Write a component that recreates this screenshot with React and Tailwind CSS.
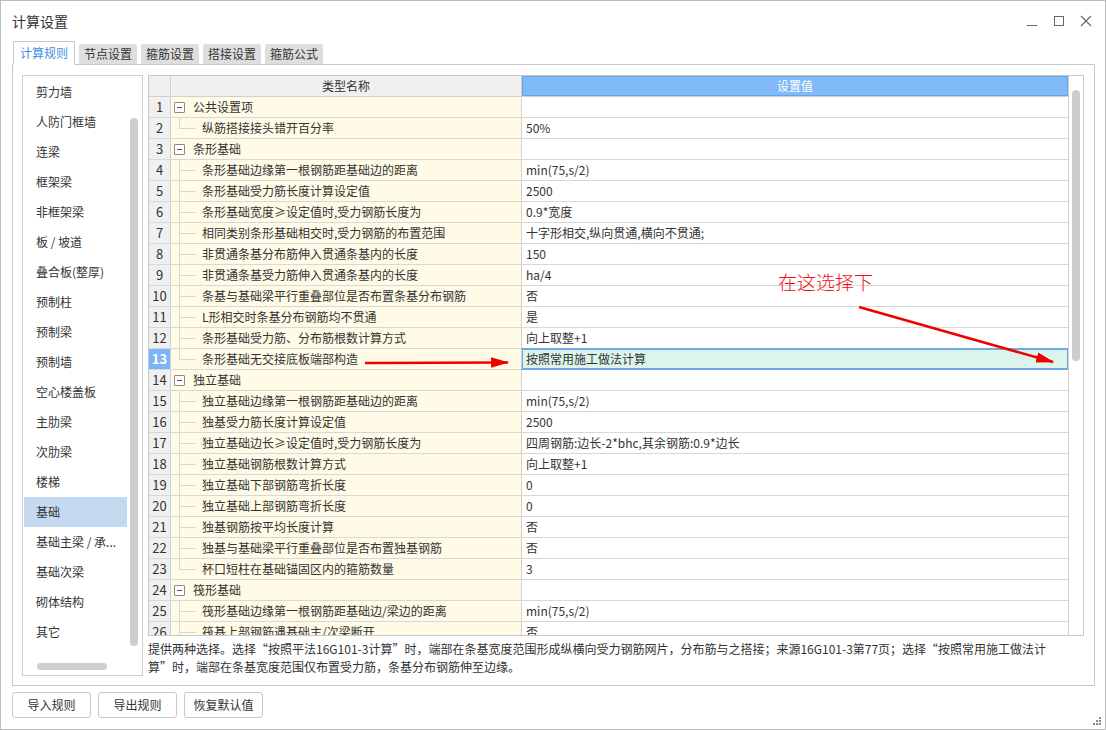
import { Fragment } from 'react'

const FONT = { fontFamily: '"Noto Sans CJK SC", "Noto Sans", sans-serif' }

const sideItems = [
  '剪力墙', '人防门框墙', '连梁', '框架梁', '非框架梁', '板 / 坡道', '叠合板(整厚)', '预制柱', '预制梁', '预制墙',
  '空心楼盖板', '主肋梁', '次肋梁', '楼梯', '基础', '基础主梁 / 承...', '基础次梁', '砌体结构', '其它',
]

const tabs = ['计算规则', '节点设置', '箍筋设置', '搭接设置', '箍筋公式']

// g: group row, last: last child of its group
const rows = [
  { g: true, name: '公共设置项', value: '' },
  { name: '纵筋搭接接头错开百分率', value: '50%', last: true },
  { g: true, name: '条形基础', value: '' },
  { name: '条形基础边缘第一根钢筋距基础边的距离', value: 'min(75,s/2)' },
  { name: '条形基础受力筋长度计算设定值', value: '2500' },
  { name: '条形基础宽度≥设定值时,受力钢筋长度为', value: '0.9*宽度' },
  { name: '相同类别条形基础相交时,受力钢筋的布置范围', value: '十字形相交,纵向贯通,横向不贯通;' },
  { name: '非贯通条基分布筋伸入贯通条基内的长度', value: '150' },
  { name: '非贯通条基受力筋伸入贯通条基内的长度', value: 'ha/4' },
  { name: '条基与基础梁平行重叠部位是否布置条基分布钢筋', value: '否' },
  { name: 'L形相交时条基分布钢筋均不贯通', value: '是' },
  { name: '条形基础受力筋、分布筋根数计算方式', value: '向上取整+1' },
  { name: '条形基础无交接底板端部构造', value: '按照常用施工做法计算', last: true, sel: true },
  { g: true, name: '独立基础', value: '' },
  { name: '独立基础边缘第一根钢筋距基础边的距离', value: 'min(75,s/2)' },
  { name: '独基受力筋长度计算设定值', value: '2500' },
  { name: '独立基础边长≥设定值时,受力钢筋长度为', value: '四周钢筋:边长-2*bhc,其余钢筋:0.9*边长' },
  { name: '独立基础钢筋根数计算方式', value: '向上取整+1' },
  { name: '独立基础下部钢筋弯折长度', value: '0' },
  { name: '独立基础上部钢筋弯折长度', value: '0' },
  { name: '独基钢筋按平均长度计算', value: '否' },
  { name: '独基与基础梁平行重叠部位是否布置独基钢筋', value: '否' },
  { name: '杯口短柱在基础锚固区内的箍筋数量', value: '3', last: true },
  { g: true, name: '筏形基础', value: '' },
  { name: '筏形基础边缘第一根钢筋距基础边/梁边的距离', value: 'min(75,s/2)' },
  { name: '筏基上部钢筋遇基础主/次梁断开', value: '否' },
]

function GridRow({ row, idx }) {
  return (
    <div className="flex h-[21px] shrink-0 border-b border-[#d8d8d8]">
      <div
        className={
          row.sel
            ? 'w-[22px] shrink-0 border-r border-[#d0d0d0] bg-[#7ab5f5] text-white font-bold text-[13px] flex items-center justify-center'
            : 'w-[22px] shrink-0 border-r border-[#d0d0d0] bg-[#f0f0f0] text-[#333] text-[13px] flex items-center justify-center'
        }
      >
        {idx + 1}
      </div>
      <div className="w-[351px] shrink-0 border-r border-[#d0d0d0] bg-[#fffbe6] relative flex items-center text-[12px] text-[#333]">
        {row.g ? (
          <>
            <span className="ml-[3px] w-[11px] h-[11px] border border-[#8a8a8a] rounded-[1px] bg-white flex items-center justify-center">
              <span className="w-[5px] h-px bg-[#555]" />
            </span>
            <span className="ml-[8px]">{row.name}</span>
          </>
        ) : (
          <>
            <span
              className={
                row.last
                  ? 'absolute left-[8px] top-0 h-[11px] w-px bg-[#d6d6d6]'
                  : 'absolute left-[8px] top-0 bottom-0 w-px bg-[#d6d6d6]'
              }
            />
            <span className="absolute left-[8px] top-[10px] w-[17px] h-px bg-[#d6d6d6]" />
            <span className="ml-[31px]">{row.name}</span>
          </>
        )}
      </div>
      <div
        className={
          row.sel
            ? 'flex-1 bg-[#dcf5ea] outline-2 outline-[#6fa8e2] -outline-offset-1 flex items-center pl-[4px] text-[12px] text-[#333]'
            : 'flex-1 bg-white flex items-center pl-[4px] text-[12px] text-[#333]'
        }
      >
        {row.value}
      </div>
    </div>
  )
}

export default function App() {
  return (
    <div className="w-[1106px] h-[730px] border border-[#bdbdbd] bg-white relative flex flex-col overflow-hidden" style={FONT}>
      {/* title bar */}
      <div className="h-[40px] shrink-0 flex items-center pl-[11px] pr-[13px]">
        <span className="text-[14px] text-[#333]">计算设置</span>
        <div className="ml-auto flex items-center gap-[15px] text-[#666]">
          <svg width="12" height="12" viewBox="0 0 12 12"><path d="M1 10.5h10" stroke="#666" strokeWidth="1" /></svg>
          <svg width="12" height="12" viewBox="0 0 12 12"><rect x="1.5" y="1.5" width="9" height="9" fill="none" stroke="#666" /></svg>
          <svg width="12" height="12" viewBox="0 0 12 12"><path d="M1 1l10 10M11 1L1 11" stroke="#666" strokeWidth="1.1" /></svg>
        </div>
      </div>

      {/* tabs */}
      <div className="flex items-end gap-[4px] pl-[12px] h-[23px] shrink-0">
        {tabs.map((t, i) =>
          i === 0 ? (
            <div key={t} className="h-[24px] px-[6px] border border-[#c8c8c8] border-b-white bg-white rounded-t-[2px] text-[12px] text-[#3b8fe3] flex items-center relative z-10 -mb-px">
              {t}
            </div>
          ) : (
            <div key={t} className="h-[20px] px-[5px] bg-[#dedede] rounded-t-[2px] text-[12px] text-[#333] flex items-center">
              {t}
            </div>
          )
        )}
      </div>

      {/* tab panel */}
      <div className="mx-[11px] w-[1083px] h-[622px] border border-[#c8c8c8] flex pt-[10px] pl-[9px] shrink-0">
        {/* side list */}
        <div className="w-[121px] h-[601px] border border-[#cfcfcf] relative shrink-0">
          <div className="flex flex-col pt-[1px] pl-[1px]">
            {sideItems.map((s) => (
              <div
                key={s}
                className={
                  s === '基础'
                    ? 'h-[30px] w-[103px] bg-[#c3daf1] flex items-center pl-[12px] text-[12px] text-[#333]'
                    : 'h-[30px] w-[103px] flex items-center pl-[12px] text-[12px] text-[#333]'
                }
              >
                {s}
              </div>
            ))}
          </div>
          <div className="absolute left-[107px] top-[42px] w-[8px] h-[528px] rounded-full bg-[#cdcdcd]" />
          <div className="absolute left-[14px] top-[587px] w-[70px] h-[7px] rounded-full bg-[#cdcdcd]" />
        </div>

        <div className="ml-[5px] flex flex-col">
          {/* grid */}
          <div className="w-[936px] h-[561px] border border-[#c8c8c8] flex overflow-hidden">
            <div className="w-[919px] flex flex-col">
              <div className="flex h-[21px] shrink-0 border-b border-[#d0d0d0]">
                <div className="w-[22px] border-r border-[#d0d0d0] bg-[#f0f0f0]" />
                <div className="w-[351px] border-r border-[#d0d0d0] bg-[#f0f0f0] text-[12px] text-[#333] flex items-center justify-center">类型名称</div>
                <div className="flex-1 bg-[#80bbf8] border border-[#62a3ec] text-[12px] text-white flex items-center justify-center">设置值</div>
              </div>
              {rows.map((r, i) => (
                <GridRow key={i} row={r} idx={i} />
              ))}
            </div>
            <div className="flex-1 border-l border-[#d0d0d0] bg-white relative">
              <div className="absolute left-[3px] top-[14px] w-[8px] h-[271px] rounded-full bg-[#cdcdcd]" />
            </div>
          </div>
          {/* description */}
          <p className="w-[930px] mt-[4px] text-[12px] leading-[18px] text-[#333]">
            提供两种选择。选择“按照平法16G101-3计算”时，端部在条基宽度范围形成纵横向受力钢筋网片，分布筋与之搭接；来源16G101-3第77页；选择“按照常用施工做法计算”时，端部在条基宽度范围仅布置受力筋，条基分布钢筋伸至边缘。
          </p>
        </div>
      </div>

      {/* buttons */}
      <div className="flex gap-[7px] pl-[11px] mt-[6px]">
        {['导入规则', '导出规则', '恢复默认值'].map((b) => (
          <button key={b} className="w-[79px] h-[26px] border border-[#c8c8c8] rounded-[3px] bg-white text-[12px] text-[#333]">
            {b}
          </button>
        ))}
      </div>

      {/* resize grip */}
      <div className="absolute right-[4px] bottom-[4px] grid grid-cols-3 gap-[1px] w-[8px] h-[8px]">
        <span />
        <span />
        <span className="bg-[#888]" />
        <span />
        <span className="bg-[#888]" />
        <span className="bg-[#888]" />
        <span className="bg-[#888]" />
        <span className="bg-[#888]" />
        <span className="bg-[#888]" />
      </div>

      {/* annotations */}
      <span className="absolute left-[777px] top-[267px] text-[19px] text-[#f01010]" style={{ fontFamily: '"Noto Sans CJK SC", sans-serif', fontWeight: 300 }}>
        在这选择下
      </span>
      <svg className="absolute left-0 top-0 pointer-events-none" width="1106" height="730">
        <defs>
          <marker id="ah" markerWidth="7" markerHeight="4" refX="6.5" refY="2" orient="auto" markerUnits="strokeWidth">
            <path d="M0 0L7 2L0 4z" fill="#f00000" />
          </marker>
        </defs>
        <line x1="364" y1="362" x2="507" y2="361.5" stroke="#f00000" strokeWidth="2.6" markerEnd="url(#ah)" />
        <line x1="858" y1="306" x2="1052" y2="361" stroke="#f00000" strokeWidth="2.6" markerEnd="url(#ah)" />
      </svg>
    </div>
  )
}
